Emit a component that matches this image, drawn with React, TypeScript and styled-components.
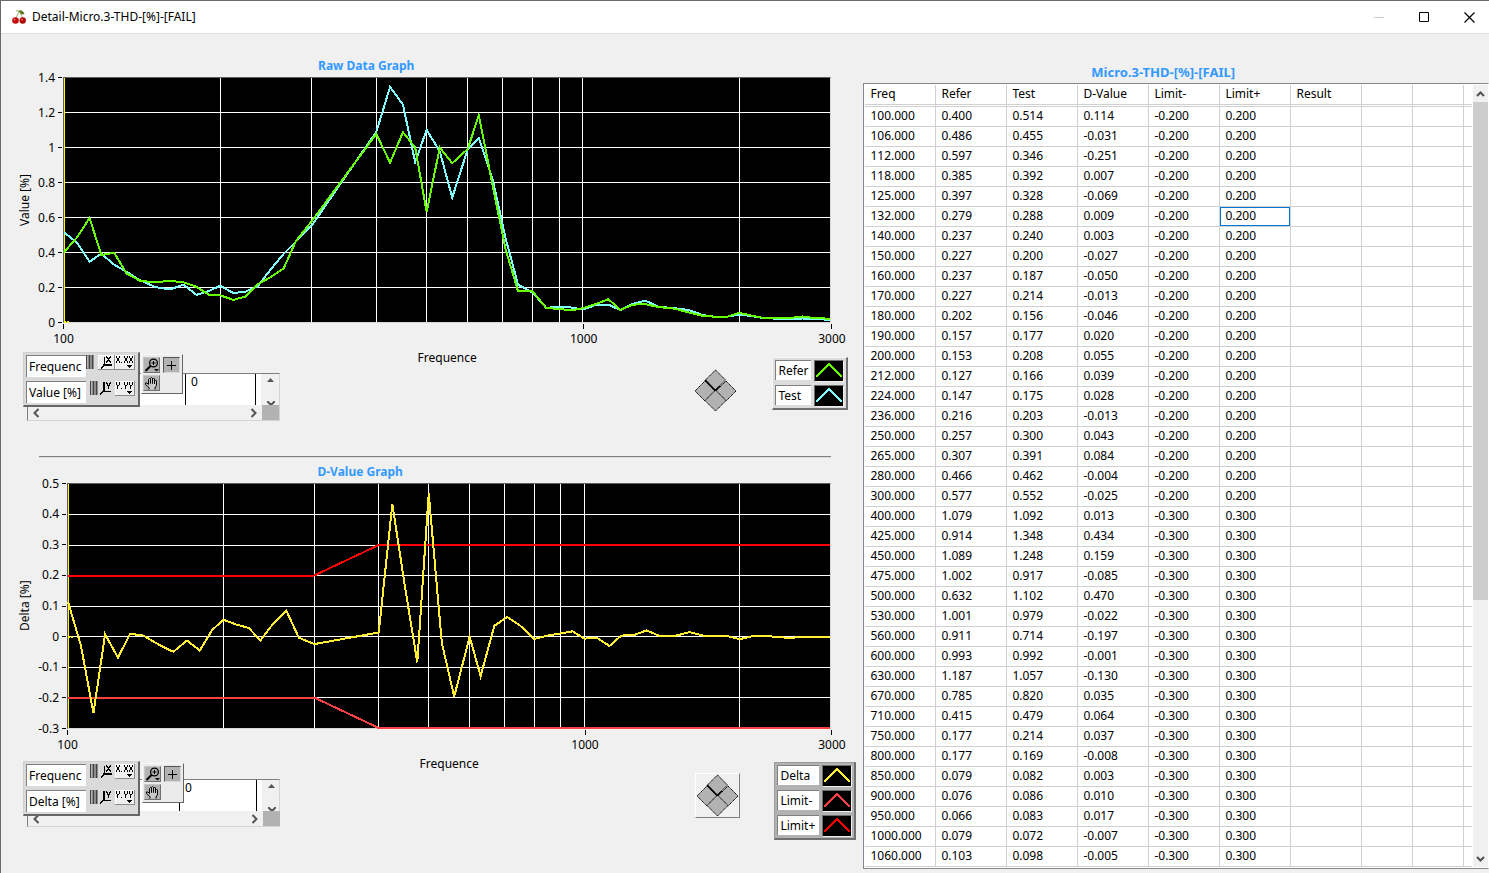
import React from "react";
import styled, { createGlobalStyle } from "styled-components";

const GlobalStyle = createGlobalStyle`
  *, *::before, *::after { box-sizing: border-box; }
  html, body { margin: 0; background: #f0f0f0; }
  body, button, input {
    font-family: "Noto Sans", "Open Sans", sans-serif;
    font-size: 12px;
    line-height: 16px;
    color: #000;
  }
`;

/* ---------- data ---------- */

type Row = [number, number, number, number, number];

// frequency, reference, test, delta, limit
const rows: Row[] = [
  [100, 0.4, 0.514, 0.114, 0.2],
  [106, 0.486, 0.455, -0.031, 0.2],
  [112, 0.597, 0.346, -0.251, 0.2],
  [118, 0.385, 0.392, 0.007, 0.2],
  [125, 0.397, 0.328, -0.069, 0.2],
  [132, 0.279, 0.288, 0.009, 0.2],
  [140, 0.237, 0.24, 0.003, 0.2],
  [150, 0.227, 0.2, -0.027, 0.2],
  [160, 0.237, 0.187, -0.05, 0.2],
  [170, 0.227, 0.214, -0.013, 0.2],
  [180, 0.202, 0.156, -0.046, 0.2],
  [190, 0.157, 0.177, 0.02, 0.2],
  [200, 0.153, 0.208, 0.055, 0.2],
  [212, 0.127, 0.166, 0.039, 0.2],
  [224, 0.147, 0.175, 0.028, 0.2],
  [236, 0.216, 0.203, -0.013, 0.2],
  [250, 0.257, 0.3, 0.043, 0.2],
  [265, 0.307, 0.391, 0.084, 0.2],
  [280, 0.466, 0.462, -0.004, 0.2],
  [300, 0.577, 0.552, -0.025, 0.2],
  [400, 1.079, 1.092, 0.013, 0.3],
  [425, 0.914, 1.348, 0.434, 0.3],
  [450, 1.089, 1.248, 0.159, 0.3],
  [475, 1.002, 0.917, -0.085, 0.3],
  [500, 0.632, 1.102, 0.47, 0.3],
  [530, 1.001, 0.979, -0.022, 0.3],
  [560, 0.911, 0.714, -0.197, 0.3],
  [600, 0.993, 0.992, -0.001, 0.3],
  [630, 1.187, 1.057, -0.13, 0.3],
  [670, 0.785, 0.82, 0.035, 0.3],
  [710, 0.415, 0.479, 0.064, 0.3],
  [750, 0.177, 0.214, 0.037, 0.3],
  [800, 0.177, 0.169, -0.008, 0.3],
  [850, 0.079, 0.082, 0.003, 0.3],
  [900, 0.076, 0.086, 0.01, 0.3],
  [950, 0.066, 0.083, 0.017, 0.3],
  [1000, 0.079, 0.072, -0.007, 0.3],
  [1060, 0.103, 0.098, -0.005, 0.3],
];

// measurements below the visible part of the table
const tail: Row[] = [
  [1120, 0.131, 0.1, -0.031, 0.3],
  [1180, 0.07, 0.068, 0.003, 0.3],
  [1250, 0.1, 0.105, 0.005, 0.3],
  [1320, 0.102, 0.122, 0.02, 0.3],
  [1400, 0.086, 0.088, 0.002, 0.3],
  [1500, 0.077, 0.079, 0.002, 0.3],
  [1600, 0.055, 0.069, 0.014, 0.3],
  [1700, 0.036, 0.04, 0.003, 0.3],
  [1800, 0.03, 0.03, 0.002, 0.3],
  [1900, 0.031, 0.031, 0.001, 0.3],
  [2000, 0.053, 0.042, -0.009, 0.3],
  [2120, 0.036, 0.034, 0.001, 0.3],
  [2240, 0.021, 0.021, 0.002, 0.3],
  [2500, 0.022, 0.018, -0.005, 0.3],
  [2650, 0.032, 0.02, -0.001, 0.3],
  [2800, 0.022, 0.018, -0.001, 0.3],
  [3000, 0.019, 0.012, -0.001, 0.3],
];

const samples = [...rows, ...tail];
const column = (pick: (r: Row) => number): [number, number][] =>
  samples.map((r) => [r[0], pick(r)]);

/* ---------- window frame ---------- */

const Window = styled.div`
  min-height: 100vh;
  display: flex;
  flex-direction: column;
  border-top: 1px solid #6b696b;
  border-left: 1px solid #6b696b;
  background: #f0f0f0;
`;

const TitleBar = styled.header`
  height: 33px;
  display: flex;
  align-items: center;
  padding: 0 2px 0 10px;
  background: #fff;
  border-bottom: 1px solid #dfdfdf;
`;

const WindowTitle = styled.h1`
  flex: 1;
  margin: 0 0 0 5px;
  font-size: 12px;
  font-weight: 400;
  line-height: 16px;
`;

const CaptionButtons = styled.div`
  display: flex;
  gap: 9px;
`;

const CaptionButton = styled.button`
  width: 36px;
  height: 30px;
  padding: 0;
  border: 0;
  background: none;
  display: grid;
  place-items: center;
`;

const Content = styled.main`
  flex: 1;
  display: flex;
  align-items: flex-start;
`;

const GraphColumn = styled.div`
  flex: 863 1 0;
  min-width: 0;
  padding-top: 24px;
`;

const TableColumn = styled.section`
  flex: 626 1 0;
  min-width: 0;
  padding-top: 30px;
`;

/* ---------- graphs ---------- */

const Heading = styled.h2<{ $inset?: number; $large?: boolean }>`
  margin: 0 ${(p) => p.$inset ?? 26}px 3px 0;
  height: 16px;
  font-size: ${(p) => (p.$large ? 13 : 12)}px;
  line-height: 16px;
  font-weight: 700;
  text-align: center;
  color: #3399ff;
`;

const Divider = styled.hr`
  margin: 35px 32px 6px 38px;
  border: 0;
  border-top: 1px solid #808080;
  border-bottom: 1px solid #dcdcdc;
`;

const PlotGrid = styled.div<{ $axis: number }>`
  display: grid;
  grid-template-columns: 16px ${(p) => p.$axis - 16}px 1fr;
  padding: 0 32px 0 16px;
`;

const YTitle = styled.div`
  writing-mode: vertical-rl;
  transform: rotate(180deg);
  text-align: center;
  line-height: 16px;
`;

const YScale = styled.div`
  display: flex;
  flex-direction: column;
  justify-content: space-between;
  padding-right: 1px;
`;

const YTick = styled.div`
  height: 1px;
  display: flex;
  align-items: center;
  justify-content: flex-end;
  gap: 3px;
  &::after {
    content: "";
    width: 4px;
    height: 1px;
    background: #000;
  }
`;

const Plot = styled.svg`
  display: block;
  width: 100%;
  height: 246px;
  overflow: visible;
  background: #000;
  border: 1px solid #5f5f5f;
  border-right-color: #d8d8d8;
  border-bottom-color: #d8d8d8;
  shape-rendering: crispEdges;
`;

const XScale = styled.div`
  grid-column: 3;
  display: grid;
  grid-template-columns: 677fr 323fr 0;
  height: 23px;
`;

const XTick = styled.div`
  width: 1px;
  display: flex;
  flex-direction: column;
  align-items: center;
  gap: 2px;
  &::before {
    content: "";
    flex: none;
    width: 1px;
    height: 5px;
    margin-top: 1px;
    background: #000;
  }
`;

const XTitle = styled.div`
  grid-column: 3;
  padding-top: 4px;
  text-align: center;
`;

type Series = { color: string; points: [number, number][] };

const VIEW_W = 767;
const VIEW_H = 244;
const gridFreqs = [200, 300, 400, 500, 600, 700, 800, 900, 1000, 2000];
const xPos = (f: number) => (Math.log(f / 100) / Math.log(30)) * VIEW_W;

function Graph({
  axis,
  yTitle,
  ticks,
  series,
}: {
  axis: number;
  yTitle: string;
  ticks: number[];
  series: Series[];
}) {
  const top = ticks[0];
  const bottom = ticks[ticks.length - 1];
  const yPos = (v: number) => ((top - v) / (top - bottom)) * VIEW_H;
  const zero = yPos(0);
  return (
    <PlotGrid $axis={axis}>
      <YTitle>{yTitle}</YTitle>
      <YScale>
        {ticks.map((t) => (
          <YTick key={t}>{t}</YTick>
        ))}
      </YScale>
      <Plot
        viewBox={`0 0 ${VIEW_W} ${VIEW_H}`}
        preserveAspectRatio="none"
        role="img"
        aria-label={yTitle}
      >
        <g stroke="#fff" strokeWidth="1">
          {gridFreqs.map((f) => (
            <line key={f} x1={xPos(f)} x2={xPos(f)} y1="0" y2={VIEW_H} vectorEffect="non-scaling-stroke" />
          ))}
          {ticks.slice(1, -1).map((t) => (
            <line key={t} x1="0" x2={VIEW_W} y1={yPos(t)} y2={yPos(t)} vectorEffect="non-scaling-stroke" />
          ))}
        </g>
        <line x1="0" x2="0" y1="0" y2={VIEW_H} stroke="#ff0" strokeWidth="1" vectorEffect="non-scaling-stroke" />
        <line x1="0" x2="6" y1={zero} y2={zero} stroke="#ff0" strokeWidth="2" strokeDasharray="2 1" vectorEffect="non-scaling-stroke" />
        {series.map((s) => (
          <polyline
            key={s.color}
            points={s.points.map(([f, v]) => `${xPos(f).toFixed(1)},${yPos(v).toFixed(1)}`).join(" ")}
            fill="none"
            stroke={s.color}
            strokeWidth="2"
            vectorEffect="non-scaling-stroke"
          />
        ))}
      </Plot>
      <XScale>
        <XTick>100</XTick>
        <XTick>1000</XTick>
        <XTick>3000</XTick>
      </XScale>
      <XTitle>Frequence</XTitle>
    </PlotGrid>
  );
}

/* ---------- controls under a graph ---------- */

const Controls = styled.div<{ $lift: number; $right: number }>`
  display: flex;
  align-items: flex-start;
  margin-top: -${(p) => p.$lift}px;
  padding: 0 ${(p) => p.$right}px 0 22px;
`;

const ToolStack = styled.div<{ $top: number }>`
  position: relative;
  width: 257px;
  padding: ${(p) => p.$top}px 0 0 4px;
`;

const ScrollBox = styled.div`
  height: 48px;
  display: grid;
  grid-template: 31px 1fr / 1fr 17px;
  border: 1px solid #808080;
  border-right-color: #d4d4d4;
  border-bottom-color: #d4d4d4;
  background: #f0f0f0;
`;

const Strip = styled.div<{ $first: number; $second: number }>`
  display: grid;
  grid-template-columns: ${(p) => p.$first}px ${(p) => p.$second}px 1fr;
  background: #fff;
  margin-right: 1px;
`;

const StripCell = styled.div`
  padding-left: 5px;
  border-right: 1px solid #000;
  &:last-child {
    border: 0;
  }
`;

const StripBar = styled.div<{ $row?: boolean }>`
  display: flex;
  flex-direction: ${(p) => (p.$row ? "row" : "column")};
  align-items: center;
  justify-content: space-between;
  padding: ${(p) => (p.$row ? "0 4px" : "4px 0 0")};
  overflow: hidden;
`;

const Corner = styled.div`
  background: #b2b2b2;
`;

const ScalePalette = styled.div`
  position: absolute;
  left: 0;
  top: 0;
  width: 117px;
  height: 55px;
  display: flex;
  flex-direction: column;
  gap: 4px;
  padding: 2px;
  background: #dadada;
  border: 1px solid #d0d0d0;
  border-right: 2px solid #666;
  border-bottom: 2px solid #666;
`;

const PaletteRow = styled.div`
  display: flex;
  align-items: flex-start;
  height: 22px;
`;

const NameField = styled.input<{ $width: number }>`
  width: ${(p) => p.$width}px;
  height: ${(p) => (p.$width > 50 ? 22 : 20)}px;
  padding: 0 0 0 2px;
  border: 0;
  border-top: 1px solid #808080;
  border-left: 1px solid #808080;
  border-radius: 0;
  background: #fff;
  outline: 0;
`;

const IconButton = styled.button<{ $w: number; $raised?: boolean; $shift?: number }>`
  flex: none;
  width: ${(p) => p.$w}px;
  height: 15px;
  margin-left: ${(p) => p.$shift ?? 0}px;
  padding: 0;
  border: 0;
  background: ${(p) => (p.$raised ? "#efefef" : "none")};
  box-shadow: ${(p) => (p.$raised ? "inset -1px -1px #8a8a8a, inset 1px 1px #fff" : "none")};
  display: block;
  svg {
    display: block;
  }
`;

const ToolPalette = styled.div<{ $left: number }>`
  position: absolute;
  left: ${(p) => p.$left}px;
  top: 2px;
  width: 42px;
  height: 40px;
  display: grid;
  grid-template: 16px 16px / 17px 17px;
  gap: 2px 3px;
  padding: 2px 1px;
  background: #ebebeb;
  border: 1px solid #f8f8f8;
  border-right-color: #666;
  border-bottom-color: #666;
`;

const ToolButton = styled.button<{ $pressed?: boolean }>`
  padding: 0;
  border: 1px solid;
  border-color: ${(p) => (p.$pressed ? "#555 #d8d8d8 #d8d8d8 #555" : "#c8c8c8 #707070 #707070 #c8c8c8")};
  background: #b2b2b2;
  display: grid;
  place-items: center;
  svg {
    display: block;
  }
`;

const LockIcon = () => (
  <svg width="8" height="15" viewBox="0 0 8 15" shapeRendering="crispEdges">
    <rect x="0" y="0" width="8" height="14" fill="#8c8c8c" />
    <path d="M0.5 0V14M3.5 0V14M6.5 0V14" stroke="#444" />
    <path d="M1.5 1V13" stroke="#b5b5b5" />
  </svg>
);

const AxisIcon = ({ letter }: { letter: string }) => (
  <svg width="17" height="15" viewBox="0 0 17 15" fill="none" stroke="#000" shapeRendering="crispEdges">
    <path
      d={
        letter === "X"
          ? "M6.5 2V10M5 10.5H14M5 9.5H14M5.5 10V12M4.5 11V13M3.5 12V14"
          : "M5.5 1V10M6.5 1V10M5 10.5H13M4.5 10V12M3.5 11V13M2.5 12V14"
      }
    />
    {letter === "X" ? (
      <path d="M8.5 1V3M9.5 2V4M10.5 3V6M9.5 5V7M8.5 6V8M12.5 1V3M11.5 2V4M11.5 5V7M12.5 6V8" />
    ) : (
      <path d="M8.5 1V3M9.5 2V5M10.5 4V8M12.5 1V3M11.5 2V5" />
    )}
  </svg>
);

const FormatIcon = ({ letter }: { letter: string }) => (
  <svg width="20" height="15" viewBox="0 0 20 15" shapeRendering="crispEdges">
    <g fill="none" stroke="#000">
      {[1, 9, 14].map((x) => (
        <path
          key={x}
          transform={`translate(${x} 1)`}
          d={
            letter === "X"
              ? "M0.5 0V2M3.5 0V2M1.5 2V5M2.5 2V5M0.5 5V7M3.5 5V7"
              : "M0.5 0V3M3.5 0V3M1.5 3V4M2.5 3V4M1.5 4V7"
          }
        />
      ))}
      <path d="M6 7.5H7" />
    </g>
    <path d="M12 10H17V11H16V12H15V13H14V12H13V11H12Z" fill="#000" />
  </svg>
);

const ZoomIcon = () => (
  <svg width="15" height="14" viewBox="0 0 15 14" fill="none" stroke="#000">
    <circle cx="9.500" cy="5" r="3.9" strokeWidth="1.300" />
    <path d="M9.500 3V7M7.500 5H11.500" />
    <path d="M6.500 8L1.500 13" strokeWidth="2" />
    <path d="M10 11H15L12.500 13.500Z" fill="#000" stroke="none" />
  </svg>
);

const HandIcon = () => (
  <svg width="15" height="14" viewBox="0 0 15 14" fill="none" stroke="#000">
    <path
      d="M5 13.500V11.500L1.500 8.500V7L3 7L4.500 8.500V3.500L5.500 2.500L6.500 3.500V7.500V2.500L7.500 1.500L8.500 2.500V7.500V3L9.500 2L10.500 3V8V5L11.500 4L12.500 5V9.500L11 12V13.500"
      fill="#c8c8c8"
    />
  </svg>
);

const Chevron = ({ d }: { d: string }) => (
  <svg width="8" height="10" viewBox="0 0 8 10" fill="none" stroke="#555" strokeWidth="2">
    <path d={d} />
  </svg>
);

const NavPad = styled.button<{ $raised?: boolean; $top: number }>`
  flex: none;
  width: 45px;
  height: 45px;
  margin: ${(p) => p.$top}px 34px 0 auto;
  padding: 0;
  border: 1px solid;
  border-color: ${(p) => (p.$raised ? "#fff #808080 #808080 #fff" : "transparent")};
  background: none;
  display: grid;
  place-items: center;
`;

const NavIcon = () => (
  <svg width="43" height="43" viewBox="0 0 43 43" fill="#b2b2b2" stroke="#000" strokeDasharray="1.5 0.5">
    <path d="M21.500 1L31.500 11L21.500 21L11.500 11Z" />
    <path d="M11 12L21 22L11 32L1 22Z" />
    <path d="M32 12L42 22L32 32L22 22Z" />
    <path d="M21.500 21L32 31.500L21.500 42L11 31.500Z" />
    <path d="M11 11L21 21.500M21 21.500L26 17" fill="none" strokeWidth="1.500" strokeDasharray="none" />
  </svg>
);

const Legend = styled.div<{ $dark?: boolean }>`
  display: flex;
  flex-direction: column;
  gap: 4px;
  padding: 2px;
  background: ${(p) => (p.$dark ? "#b2b2b2" : "#dcdcdc")};
  border: 1px solid ${(p) => (p.$dark ? "#9a9a9a" : "#f8f8f8")};
  border-right: 2px solid #707070;
  border-bottom: 2px solid #707070;
`;

const LegendRow = styled.div`
  display: flex;
  gap: 3px;
  height: 21px;
`;

const Swatch = styled.svg`
  display: block;
  width: 30px;
  height: 22px;
  background: #000;
  border: 1px solid #707070;
  border-right-color: #f0f0f0;
  border-bottom-color: #f0f0f0;
  shape-rendering: crispEdges;
`;

const LegendSlot = styled.div<{ $top: number }>`
  padding-top: ${(p) => p.$top}px;
`;

type ControlsSpec = {
  lift: number;
  right: number;
  yName: string;
  strip: [number, number];
  stripTop: number;
  toolLeft: number;
  padTop: number;
  raised?: boolean;
  labelWidth: number;
  legend: [string, string][];
};

function GraphControls(p: ControlsSpec) {
  const gap = p.raised ? 4 : 0;
  return (
    <Controls $lift={p.lift} $right={p.right}>
      <ToolStack $top={p.stripTop}>
        <ScrollBox>
          <Strip $first={p.strip[0]} $second={p.strip[1]}>
            <StripCell />
            <StripCell>0</StripCell>
            <StripCell />
          </Strip>
          <StripBar>
            <svg width="7" height="4" viewBox="0 0 7 4" fill="#555">
              <path d="M0 4L3.500 0L7 4Z" />
            </svg>
            <svg width="8" height="4" viewBox="0 0 8 4" fill="none" stroke="#555" strokeWidth="2">
              <path d="M0 0L4 4L8 0" />
            </svg>
          </StripBar>
          <StripBar $row>
            <Chevron d="M6.500 1L2.500 5L6.500 9" />
            <Chevron d="M1.500 1L5.500 5L1.500 9" />
          </StripBar>
          <Corner />
        </ScrollBox>
        <ScalePalette>
          <PaletteRow>
            <NameField $width={60} defaultValue="Frequenc" aria-label="X scale name" />
            <IconButton $w={8} $shift={gap} aria-label="Lock X scale">
              <LockIcon />
            </IconButton>
            <IconButton $w={17} $shift={4 - gap} $raised={!p.raised} aria-label="Autoscale X">
              <AxisIcon letter="X" />
            </IconButton>
            <IconButton $w={20} $raised aria-label="X format">
              <FormatIcon letter="X" />
            </IconButton>
          </PaletteRow>
          <PaletteRow>
            <NameField $width={60} defaultValue={p.yName} aria-label="Y scale name" />
            <IconButton $w={8} $shift={4} aria-label="Lock Y scale">
              <LockIcon />
            </IconButton>
            <IconButton $w={17} aria-label="Autoscale Y">
              <AxisIcon letter="Y" />
            </IconButton>
            <IconButton $w={20} $raised aria-label="Y format">
              <FormatIcon letter="Y" />
            </IconButton>
          </PaletteRow>
        </ScalePalette>
        <ToolPalette $left={p.toolLeft}>
          <ToolButton aria-label="Zoom">
            <ZoomIcon />
          </ToolButton>
          <ToolButton $pressed aria-label="Cursor">
            <svg width="11" height="11" viewBox="0 0 11 11" stroke="#000">
              <path d="M5.500 1V10M1 5.500H10" />
            </svg>
          </ToolButton>
          <ToolButton aria-label="Pan">
            <HandIcon />
          </ToolButton>
        </ToolPalette>
      </ToolStack>
      <NavPad $raised={p.raised} $top={p.padTop} aria-label="Move cursor">
        <NavIcon />
      </NavPad>
      <LegendSlot $top={p.raised ? 1 : 5}>
        <Legend $dark={p.raised}>
          {p.legend.map(([name, color]) => (
            <LegendRow key={name}>
              <NameField $width={p.labelWidth} defaultValue={name} aria-label={`${name} plot name`} />
              <Swatch viewBox="0 0 28 20">
                <path d="M1 16L14 3L27 16" fill="none" stroke={color} strokeWidth="2" />
              </Swatch>
            </LegendRow>
          ))}
        </Legend>
      </LegendSlot>
    </Controls>
  );
}

/* ---------- table ---------- */

const TableFrame = styled.div`
  display: flex;
  border: 1px solid #828790;
  border-right-color: #fff;
  padding: 1px 0 1px 1px;
  background: #fff;
`;

const TableClip = styled.div`
  flex: 1;
  min-width: 0;
  overflow: hidden;
`;

const DataTable = styled.table`
  width: 100%;
  table-layout: fixed;
  border-collapse: separate;
  border-spacing: 0;
  th,
  td {
    height: 20px;
    padding: 0 0 2px 5px;
    border-right: 1px solid #d0d0d0;
    border-bottom: 1px solid #d0d0d0;
    font-weight: 400;
    line-height: 16px;
    text-align: left;
    white-space: nowrap;
  }
  th {
    height: 22px;
    border-bottom: 3px double #d0d0d0;
  }
  th:last-child,
  td:last-child {
    border-right: 0;
  }
`;

const Cell = styled.td<{ $selected?: boolean }>`
  box-shadow: ${(p) => (p.$selected ? "inset 0 0 0 1px #0078d7" : "none")};
`;

const ScrollTrack = styled.div`
  width: 15px;
  margin-left: 1px;
  display: flex;
  flex-direction: column;
  background: #f0f0f0;
`;

const ScrollArrow = styled.button`
  height: 17px;
  padding: 0;
  border: 0;
  background: none;
  display: grid;
  place-items: center;
`;

const ScrollThumb = styled.div`
  flex: 498 1 0;
  background: #cdcdcd;
`;

const ScrollRest = styled.div`
  flex: 250 1 0;
`;

const headers = ["Freq", "Refer", "Test", "D-Value", "Limit-", "Limit+", "Result", "", "", ""];
const widths = [71, 71, 71, 71, 71, 71, 71, 51, 51];

function ResultTable() {
  return (
    <TableFrame>
      <TableClip>
        <DataTable>
          <colgroup>
            {widths.map((w, i) => (
              <col key={i} width={w} />
            ))}
            <col />
          </colgroup>
          <thead>
            <tr>
              {headers.map((h, i) => (
                <th key={i}>{h}</th>
              ))}
            </tr>
          </thead>
          <tbody>
            {rows.map(([f, refer, test, delta, limit]) => (
              <tr key={f}>
                {[f, refer, test, delta, -limit, limit].map((v, i) => (
                  <Cell key={i} $selected={f === 132 && i === 5}>
                    {v.toFixed(3)}
                  </Cell>
                ))}
                <Cell />
                <Cell />
                <Cell />
                <Cell />
              </tr>
            ))}
          </tbody>
        </DataTable>
      </TableClip>
      <ScrollTrack>
        <ScrollArrow aria-label="Scroll up">
          <svg width="9" height="6" viewBox="0 0 9 6" fill="none" stroke="#505050" strokeWidth="2">
            <path d="M1 5L4.500 1.500L8 5" />
          </svg>
        </ScrollArrow>
        <ScrollThumb />
        <ScrollRest />
        <ScrollArrow aria-label="Scroll down">
          <svg width="9" height="6" viewBox="0 0 9 6" fill="none" stroke="#505050" strokeWidth="2">
            <path d="M1 1L4.500 4.500L8 1" />
          </svg>
        </ScrollArrow>
      </ScrollTrack>
    </TableFrame>
  );
}

/* ---------- page ---------- */

const CherryIcon = () => (
  <svg width="16" height="16" viewBox="0 0 16 16">
    <path d="M7 2.500C9 0.500 12 1 13.500 5C11 6 9 5 8.500 3.500Z" fill="#5f7a1c" />
    <path d="M5 1.500L8.500 2.500L4.500 9M9 3L11.500 9" fill="none" stroke="#8a9a4a" strokeWidth="0.800" />
    <circle cx="4.500" cy="11.500" r="3.300" fill="#c40a0a" />
    <circle cx="11.700" cy="11.500" r="3.200" fill="#b00808" />
    <circle cx="3.500" cy="10.500" r="1" fill="#f07070" />
    <circle cx="11" cy="10.500" r="1" fill="#f07070" />
  </svg>
);

export default function App() {
  return (
    <Window>
      <GlobalStyle />
      <TitleBar>
        <CherryIcon />
        <WindowTitle>Detail-Micro.3-THD-[%]-[FAIL]</WindowTitle>
        <CaptionButtons>
          <CaptionButton aria-label="Minimize">
            <svg width="11" height="11" viewBox="0 0 11 11" stroke="#ccc">
              <path d="M0 5.500H10" />
            </svg>
          </CaptionButton>
          <CaptionButton aria-label="Maximize">
            <svg width="11" height="11" viewBox="0 0 11 11" fill="none" stroke="#000">
              <path d="M0.500 0.500H9.500V9.500H0.500Z" />
            </svg>
          </CaptionButton>
          <CaptionButton aria-label="Close">
            <svg width="11" height="11" viewBox="0 0 11 11" fill="none" stroke="#000" strokeWidth="1.200">
              <path d="M0.500 0.500L10.500 10.500M10.500 0.500L0.500 10.500" />
            </svg>
          </CaptionButton>
        </CaptionButtons>
      </TitleBar>
      <Content>
        <GraphColumn>
          <Heading $inset={132}>Raw Data Graph</Heading>
          <Graph
            axis={46}
            yTitle="Value [%]"
            ticks={[1.4, 1.2, 1, 0.8, 0.6, 0.4, 0.2, 0]}
            series={[
              { color: "#80ffff", points: column((r) => r[2]) },
              { color: "#66ff00", points: column((r) => r[1]) },
            ]}
          />
          <GraphControls
            lift={14}
            right={15}
            yName="Value [%]"
            strip={[158, 70]}
            stripTop={21}
            toolLeft={118}
            padTop={16}
            labelWidth={36}
            legend={[
              ["Refer", "#66ff00"],
              ["Test", "#80ffff"],
            ]}
          />
          <Divider />
          <Heading $inset={144}>D-Value Graph</Heading>
          <Graph
            axis={50}
            yTitle="Delta [%]"
            ticks={[0.5, 0.4, 0.3, 0.2, 0.1, 0, -0.1, -0.2, -0.3]}
            series={[
              { color: "#ff0000", points: column((r) => r[4]) },
              { color: "#ff4040", points: column((r) => -r[4]) },
              { color: "#ffee33", points: column((r) => r[3]) },
            ]}
          />
          <GraphControls
            lift={11}
            right={7}
            yName="Delta [%]"
            strip={[152, 77]}
            stripTop={18}
            toolLeft={119}
            padTop={12}
            raised
            labelWidth={42}
            legend={[
              ["Delta", "#ffee33"],
              ["Limit-", "#ff4040"],
              ["Limit+", "#ff0000"],
            ]}
          />
        </GraphColumn>
        <TableColumn>
          <Heading $large>Micro.3-THD-[%]-[FAIL]</Heading>
          <ResultTable />
        </TableColumn>
      </Content>
    </Window>
  );
}
